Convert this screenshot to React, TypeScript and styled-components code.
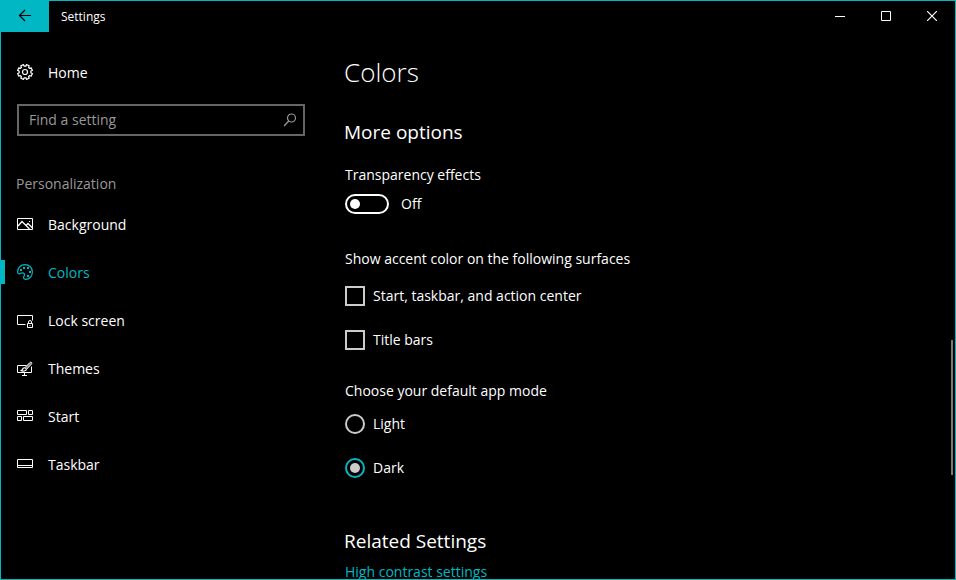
import React, { useState } from "react";
import styled, { createGlobalStyle } from "styled-components";

const accent = "#00b7c3";

const GlobalStyle = createGlobalStyle`
  * { box-sizing: border-box; }
  body { margin: 0; background: #000; }
  body, button, input {
    font-family: "Open Sans", "Noto Sans", sans-serif;
    font-size: 14px;
    line-height: 20px;
    color: #fff;
  }
`;

const Window = styled.div`
  display: flex;
  flex-direction: column;
  height: 100vh;
  border: 1px solid ${accent};
  background: #000;
  overflow: hidden;
`;

const TitleBar = styled.header`
  display: flex;
  align-items: stretch;
  flex: none;
  height: 31px;
`;

const BarButton = styled.button<{ $accent?: boolean }>`
  display: flex;
  align-items: center;
  justify-content: center;
  width: ${(p) => (p.$accent ? 48 : 46)}px;
  padding: 0 0 1px;
  border: 0;
  color: ${(p) => (p.$accent ? "#000" : "#fff")};
  background: ${(p) => (p.$accent ? accent : "transparent")};
`;

const WindowTitle = styled.span`
  flex: 1;
  padding-left: 12px;
  font-size: 12px;
  line-height: 31px;
`;

const Body = styled.div`
  display: grid;
  grid-template-columns: 320px 1fr;
  flex: 1;
  min-height: 0;
`;

const Sidebar = styled.nav`
  display: flex;
  flex-direction: column;
  padding-top: 16px;
`;

const NavLink = styled.a<{ $active?: boolean }>`
  display: flex;
  align-items: center;
  height: 48px;
  color: ${(p) => (p.$active ? accent : "#fff")};
  text-decoration: none;
  &::before {
    content: "";
    width: 4px;
    height: 24px;
    margin-right: 12px;
    background: ${(p) => (p.$active ? accent : "transparent")};
  }
`;

const NavText = styled.span`
  margin-left: 15px;
  padding-top: 2px;
`;

const SearchBox = styled.label`
  display: flex;
  align-items: center;
  height: 32px;
  margin: 8px 16px 38px;
  padding: 0 5px 0 10px;
  border: 2px solid #666;
  color: #999;
`;

const SearchInput = styled.input`
  flex: 1;
  min-width: 0;
  padding: 0;
  border: 0;
  outline: 0;
  background: transparent;
  &::placeholder { color: #999; opacity: 1; }
`;

const GroupName = styled.span`
  margin: 0 15px 6px;
  color: #999;
`;

const Pane = styled.main`
  position: relative;
  padding: 20px 24px 0 23px;
  overflow: hidden;
`;

const PageTitle = styled.h1`
  margin: 0 0 26px;
  font-size: 26px;
  font-weight: 300;
  line-height: 40px;
`;

const SectionTitle = styled.h2`
  margin: 0 0 19px;
  font-size: 19px;
  font-weight: 400;
  line-height: 28px;
`;

const Group = styled.fieldset<{ $space: number }>`
  display: flex;
  flex-direction: column;
  gap: 24px;
  margin: 0 0 ${(p) => p.$space}px 1px;
  padding: 0;
  border: 0;
`;

const Caption = styled.legend<{ $space: number }>`
  padding: 0;
  margin-bottom: ${(p) => p.$space}px;
`;

const Option = styled.label`
  display: flex;
  align-items: center;
  align-self: flex-start;
  gap: 8px;
`;

const Choice = styled.input`
  appearance: none;
  display: grid;
  place-items: center;
  width: 20px;
  height: 20px;
  margin: 0;
  border: 2px solid #ccc;
  &[type="radio"] { border-radius: 50%; }
  &[type="radio"]:checked { border-color: ${accent}; }
  &:checked::after {
    content: "";
    width: 10px;
    height: 10px;
    border-radius: inherit;
    background: #ccc;
  }
  &[type="radio"]:checked::after { border-radius: 50%; }
`;

const Toggle = styled.input`
  appearance: none;
  display: flex;
  align-items: center;
  width: 44px;
  height: 20px;
  margin: 0 4px 0 0;
  padding: 0 3px;
  border: 2px solid #fff;
  border-radius: 10px;
  &::before {
    content: "";
    width: 10px;
    height: 10px;
    border-radius: 50%;
    background: #fff;
  }
  &:checked {
    justify-content: flex-end;
    border-color: ${accent};
    background: ${accent};
  }
`;

const RelatedTitle = styled(SectionTitle)`
  margin-bottom: 7px;
`;

const RelatedLink = styled.a`
  display: block;
  margin-left: 1px;
  color: ${accent};
  text-decoration: none;
`;

const ScrollThumb = styled.div`
  position: absolute;
  top: 56.3%;
  right: 2px;
  width: 2px;
  height: 24.6%;
  background: #7a7a7a;
`;

const Icon = styled.svg`
  flex: none;
  fill: none;
  stroke: currentColor;
`;

const Glyph = ({ size = 16, children }: { size?: number; children: React.ReactNode }) => (
  <Icon width={size} height={size} viewBox={`0 0 ${size} ${size}`} aria-hidden="true">
    {children}
  </Icon>
);

const gearPath = (() => {
  const points: string[] = [];
  for (let tooth = 0; tooth < 8; tooth++) {
    const middle = (tooth * Math.PI) / 4 + Math.PI / 8;
    const corners: [number, number][] = [
      [-0.25, 5.9],
      [-0.2, 7.5],
      [0.2, 7.5],
      [0.25, 5.9],
    ];
    for (const [turn, radius] of corners) {
      const x = 8 + radius * Math.cos(middle + turn);
      const y = 8 + radius * Math.sin(middle + turn);
      points.push(`${x.toFixed(2)} ${y.toFixed(2)}`);
    }
  }
  return `M${points.join("L")}Z`;
})();

const GearIcon = () => (
  <Glyph>
    <path d={gearPath} strokeWidth="1.2" strokeLinejoin="round" />
    <circle cx="8" cy="8" r="2.5" strokeWidth="1.2" />
  </Glyph>
);

const PictureIcon = () => (
  <Glyph>
    <path d="M.5 2.5h15v11H.5z" />
    <path d="M1 10l4-4.500 7.500 7.500M9 9.500l2-2 4.500 4.500" strokeWidth="1.300" />
    <path d="M12 5h1v1h-1z" fill="currentColor" stroke="none" />
  </Glyph>
);

const PaletteIcon = () => (
  <Glyph>
    <path
      d="M.6 8C.6 3.800 3.800.6 8 .6s7.400 3.200 7.400 7.400-3.200 7.400-6.500 7.400c-1.600 0-2.300-.8-2.300-2 0-1 .9-1.600.9-2.700 0-1.300-.9-1.900-2-1.900-1.500 0-2 1-3.200 1C1.200 9.800.6 9.200.6 8z"
      strokeWidth="1.200"
    />
    <g fill="currentColor" stroke="none">
      <rect x="3" y="5" width="2" height="2" />
      <rect x="6" y="3" width="2" height="2" />
      <rect x="10" y="3" width="2" height="2" />
      <rect x="12" y="7" width="2" height="2" />
      <rect x="10" y="11" width="2" height="2" />
    </g>
  </Glyph>
);

const LockScreenIcon = () => (
  <Glyph>
    <path d="M8.500 12.500H.5v-9h15v5M10.500 11.500h5v4h-5zM11.500 11.500v-1.500a1.500 1.500 0 0 1 3 0v1.500" />
    <path d="M12.500 13h1v1h-1z" fill="currentColor" stroke="none" />
  </Glyph>
);

const ThemesIcon = () => (
  <Glyph>
    <path d="M9.500 5.500H.5v7h14V6.500M7.500 12.500v2.500M5 15.500h5" />
    <path
      d="M14.500 2.500c.6.500.4 1-.1 1.600L9.500 9.300 7.900 7.700l5-5.200c.5-.5 1.100-.5 1.600 0z"
      fill="currentColor"
      fillOpacity=".5"
    />
    <path
      d="M7.800 7.900c-1.500-.1-2.100.7-2.400 1.600-.2.700-.9 1-1.900 1 2.300 1 5.700.8 5.900-1.200"
      strokeWidth="1.200"
    />
  </Glyph>
);

const StartIcon = () => (
  <Glyph>
    <path d="M.5 2.500h9v4h-9zM11.500 2.500h4v4h-4zM.5 8.500h4v4h-4zM6.500 8.500h9v4h-9z" />
  </Glyph>
);

const TaskbarIcon = () => (
  <Glyph>
    <path d="M.5 3.500h15v8H.5zM.5 9.500h15" />
  </Glyph>
);

const SearchIcon = () => (
  <Glyph>
    <circle cx="9.500" cy="6" r="4" strokeWidth="1.200" />
    <path d="M6.700 9 2 14" strokeWidth="1.200" />
  </Glyph>
);

const sections = [
  { name: "Background", icon: <PictureIcon /> },
  { name: "Colors", icon: <PaletteIcon /> },
  { name: "Lock screen", icon: <LockScreenIcon /> },
  { name: "Themes", icon: <ThemesIcon /> },
  { name: "Start", icon: <StartIcon /> },
  { name: "Taskbar", icon: <TaskbarIcon /> },
];

export default function App() {
  const [transparent, setTransparent] = useState(false);
  const [mode, setMode] = useState("Dark");

  return (
    <>
      <GlobalStyle />
      <Window>
        <TitleBar>
          <BarButton $accent aria-label="Back">
            <Glyph>
              <path d="M14 7.500H2.500M8 2 2.500 7.500 8 13" strokeWidth="1.200" />
            </Glyph>
          </BarButton>
          <WindowTitle>Settings</WindowTitle>
          <BarButton aria-label="Minimize">
            <Glyph size={10}>
              <path d="M0 5.500h10" />
            </Glyph>
          </BarButton>
          <BarButton aria-label="Maximize">
            <Glyph size={10}>
              <path d="M.5.5h9v9h-9z" />
            </Glyph>
          </BarButton>
          <BarButton aria-label="Close">
            <Glyph size={10}>
              <path d="m0 0 10 10M10 0 0 10" strokeWidth="1.200" />
            </Glyph>
          </BarButton>
        </TitleBar>
        <Body>
          <Sidebar>
            <NavLink href="#home">
              <GearIcon />
              <NavText>Home</NavText>
            </NavLink>
            <SearchBox>
              <SearchInput type="text" placeholder="Find a setting" aria-label="Find a setting" />
              <SearchIcon />
            </SearchBox>
            <GroupName>Personalization</GroupName>
            {sections.map(({ name, icon }) => (
              <NavLink key={name} href={`#${name}`} $active={name === "Colors"}>
                {icon}
                <NavText>{name}</NavText>
              </NavLink>
            ))}
          </Sidebar>
          <Pane>
            <PageTitle>Colors</PageTitle>
            <SectionTitle>More options</SectionTitle>
            <Group $space={35}>
              <Caption $space={9}>Transparency effects</Caption>
              <Option>
                <Toggle
                  type="checkbox"
                  role="switch"
                  checked={transparent}
                  onChange={(e) => setTransparent(e.target.checked)}
                />
                {transparent ? "On" : "Off"}
              </Option>
            </Group>
            <Group $space={31}>
              <Caption $space={17}>Show accent color on the following surfaces</Caption>
              <Option>
                <Choice type="checkbox" />
                Start, taskbar, and action center
              </Option>
              <Option>
                <Choice type="checkbox" />
                Title bars
              </Option>
            </Group>
            <Group $space={49}>
              <Caption $space={13}>Choose your default app mode</Caption>
              {["Light", "Dark"].map((name) => (
                <Option key={name}>
                  <Choice
                    type="radio"
                    name="mode"
                    checked={mode === name}
                    onChange={() => setMode(name)}
                  />
                  {name}
                </Option>
              ))}
            </Group>
            <RelatedTitle>Related Settings</RelatedTitle>
            <RelatedLink href="#contrast">High contrast settings</RelatedLink>
            <ScrollThumb />
          </Pane>
        </Body>
      </Window>
    </>
  );
}
